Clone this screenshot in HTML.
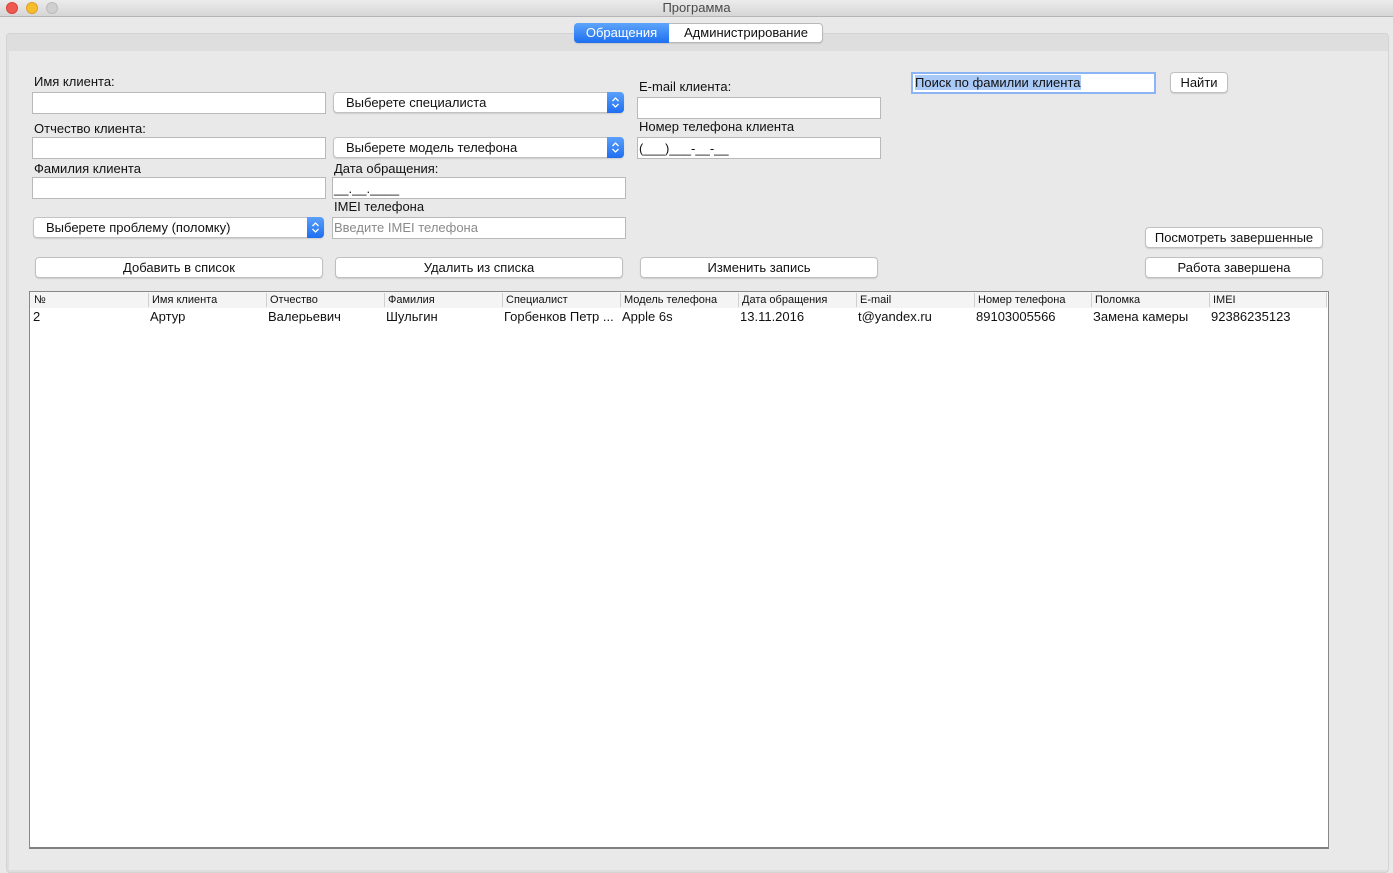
<!DOCTYPE html>
<html><head><meta charset="utf-8">
<style>
*{box-sizing:border-box;margin:0;padding:0}
body{width:1393px;height:870px;background:#e9e9e9;font-family:"Liberation Sans","DejaVu Sans",sans-serif;font-size:13px;color:#111;position:relative;overflow:hidden}
.a{position:absolute}
.title{left:0;top:0;width:1393px;height:17px;background:linear-gradient(#ececec,#d6d6d6);border-bottom:1px solid #b5b5b5;text-align:center;font-size:13px;line-height:16px;color:#4a4a4a}
.dot{top:2px;width:12px;height:12px;border-radius:50%}
.lbl{font-size:13px;line-height:15px;white-space:nowrap}
.inp{background:#fff;border:1px solid #b9b9b9;height:22px;font-size:13px;line-height:20px;padding-left:1px;white-space:nowrap;overflow:hidden}
.sel{background:#fff;border:1px solid #c3c3c3;border-radius:4px;height:21px;line-height:19px;padding-left:12px;font-size:13px;box-shadow:0 1px 1px rgba(0,0,0,.12)}
.sel .ar{position:absolute;right:-1px;top:-1px;width:17px;height:21px;background:linear-gradient(#5aa0fb,#1f6ef0);border-radius:0 4px 4px 0}
.sel .ar svg{position:absolute;left:4px;top:4px}
.btn{background:#fff;border:1px solid #c0c0c0;border-radius:4px;height:21px;line-height:19px;text-align:center;font-size:13px;box-shadow:0 1px 1px rgba(0,0,0,.12);white-space:nowrap}
.th{top:293px;font-size:11px;line-height:14px;white-space:nowrap;border-left:1px solid #d0d0d0;padding-left:3px;height:14px}
.td{top:309px;font-size:13px;line-height:15px;white-space:nowrap}
</style></head><body>
<div class="a title">Программа</div>
<div class="a dot" style="left:6px;background:#ee5a52;border:1px solid #d8443d"></div>
<div class="a dot" style="left:26px;background:#f6bd2f;border:1px solid #dea225"></div>
<div class="a dot" style="left:46px;background:#cfcfcf;border:1px solid #bcbcbc"></div>

<div class="a" style="left:6px;top:33px;width:1383px;height:840px;border:1px solid #d3d3d3;border-radius:4px;background:#dedede"></div>
<div class="a" style="left:9px;top:51px;width:1379px;height:819px;background:#e9e9e9"></div>

<div class="a" style="left:574px;top:23px;width:249px;height:20px;border:1px solid #b8b8b8;border-radius:4px;background:#fff;box-shadow:0 1px 1px rgba(0,0,0,.1)"></div>
<div class="a" style="left:574px;top:23px;width:95px;height:20px;border-radius:4px 0 0 4px;background:linear-gradient(#5da4fb,#1d6ff0);color:#fff;text-align:center;line-height:19px">Обращения</div>
<div class="a" style="left:669px;top:23px;width:154px;height:20px;text-align:center;line-height:19px">Администрирование</div>

<div class="a lbl" style="left:34px;top:74px">Имя клиента:</div>
<div class="a inp" style="left:32px;top:92px;width:294px"></div>
<div class="a lbl" style="left:34px;top:121px">Отчество клиента:</div>
<div class="a inp" style="left:32px;top:137px;width:294px"></div>
<div class="a lbl" style="left:34px;top:161px">Фамилия клиента</div>
<div class="a inp" style="left:32px;top:177px;width:294px"></div>

<div class="a sel" style="left:333px;top:92px;width:291px">Выберете специалиста<div class="ar"><svg width="9" height="13" viewBox="0 0 9 13"><path d="M1.5 5 4.5 2 7.5 5M1.5 8 4.5 11 7.5 8" fill="none" stroke="#fff" stroke-width="1.3"/></svg></div></div>
<div class="a sel" style="left:333px;top:137px;width:291px">Выберете модель телефона<div class="ar"><svg width="9" height="13" viewBox="0 0 9 13"><path d="M1.5 5 4.5 2 7.5 5M1.5 8 4.5 11 7.5 8" fill="none" stroke="#fff" stroke-width="1.3"/></svg></div></div>
<div class="a sel" style="left:33px;top:217px;width:291px">Выберете проблему (поломку)<div class="ar"><svg width="9" height="13" viewBox="0 0 9 13"><path d="M1.5 5 4.5 2 7.5 5M1.5 8 4.5 11 7.5 8" fill="none" stroke="#fff" stroke-width="1.3"/></svg></div></div>

<div class="a lbl" style="left:334px;top:161px">Дата обращения:</div>
<div class="a inp" style="left:332px;top:177px;width:294px;line-height:22px">__.__.____</div>
<div class="a lbl" style="left:334px;top:199px">IMEI телефона</div>
<div class="a inp" style="left:332px;top:217px;width:294px;color:#8a8a8a">Введите IMEI телефона</div>

<div class="a lbl" style="left:639px;top:79px">E-mail клиента:</div>
<div class="a inp" style="left:637px;top:97px;width:244px"></div>
<div class="a lbl" style="left:639px;top:119px">Номер телефона клиента</div>
<div class="a inp" style="left:637px;top:137px;width:244px;line-height:22px">(___)___-__-__</div>

<div class="a inp" style="left:911px;top:72px;width:245px;border:2px solid #8ab4f4;line-height:18px;padding-left:2px"><span style="background:#a9c9f7">Поиск по фамилии клиента</span></div>
<div class="a btn" style="left:1170px;top:72px;width:58px">Найти</div>

<div class="a btn" style="left:1145px;top:227px;width:178px">Посмотреть завершенные</div>
<div class="a btn" style="left:1145px;top:257px;width:178px">Работа завершена</div>

<div class="a btn" style="left:35px;top:257px;width:288px">Добавить в список</div>
<div class="a btn" style="left:335px;top:257px;width:288px">Удалить из списка</div>
<div class="a btn" style="left:640px;top:257px;width:238px">Изменить запись</div>

<div class="a" style="left:29px;top:291px;width:1300px;height:558px;background:#fff;border:1px solid #888;border-bottom:2px solid #808080"></div>
<div class="a" style="left:30px;top:292px;width:1297px;height:16px;background:#f4f4f4"></div>
<div class="a th" style="left:31px;border-left:none">№</div>
<div class="a th" style="left:148px">Имя клиента</div>
<div class="a th" style="left:266px">Отчество</div>
<div class="a th" style="left:384px">Фамилия</div>
<div class="a th" style="left:502px">Специалист</div>
<div class="a th" style="left:620px">Модель телефона</div>
<div class="a th" style="left:738px">Дата обращения</div>
<div class="a th" style="left:856px">E-mail</div>
<div class="a th" style="left:974px">Номер телефона</div>
<div class="a th" style="left:1091px">Поломка</div>
<div class="a th" style="left:1209px">IMEI</div>
<div class="a th" style="left:1326px;width:1px"></div>

<div class="a td" style="left:33px">2</div>
<div class="a td" style="left:150px">Артур</div>
<div class="a td" style="left:268px">Валерьевич</div>
<div class="a td" style="left:386px">Шульгин</div>
<div class="a td" style="left:504px">Горбенков Петр ...</div>
<div class="a td" style="left:622px">Apple 6s</div>
<div class="a td" style="left:740px">13.11.2016</div>
<div class="a td" style="left:858px">t@yandex.ru</div>
<div class="a td" style="left:976px">89103005566</div>
<div class="a td" style="left:1093px">Замена камеры</div>
<div class="a td" style="left:1211px">92386235123</div>
</body></html>
